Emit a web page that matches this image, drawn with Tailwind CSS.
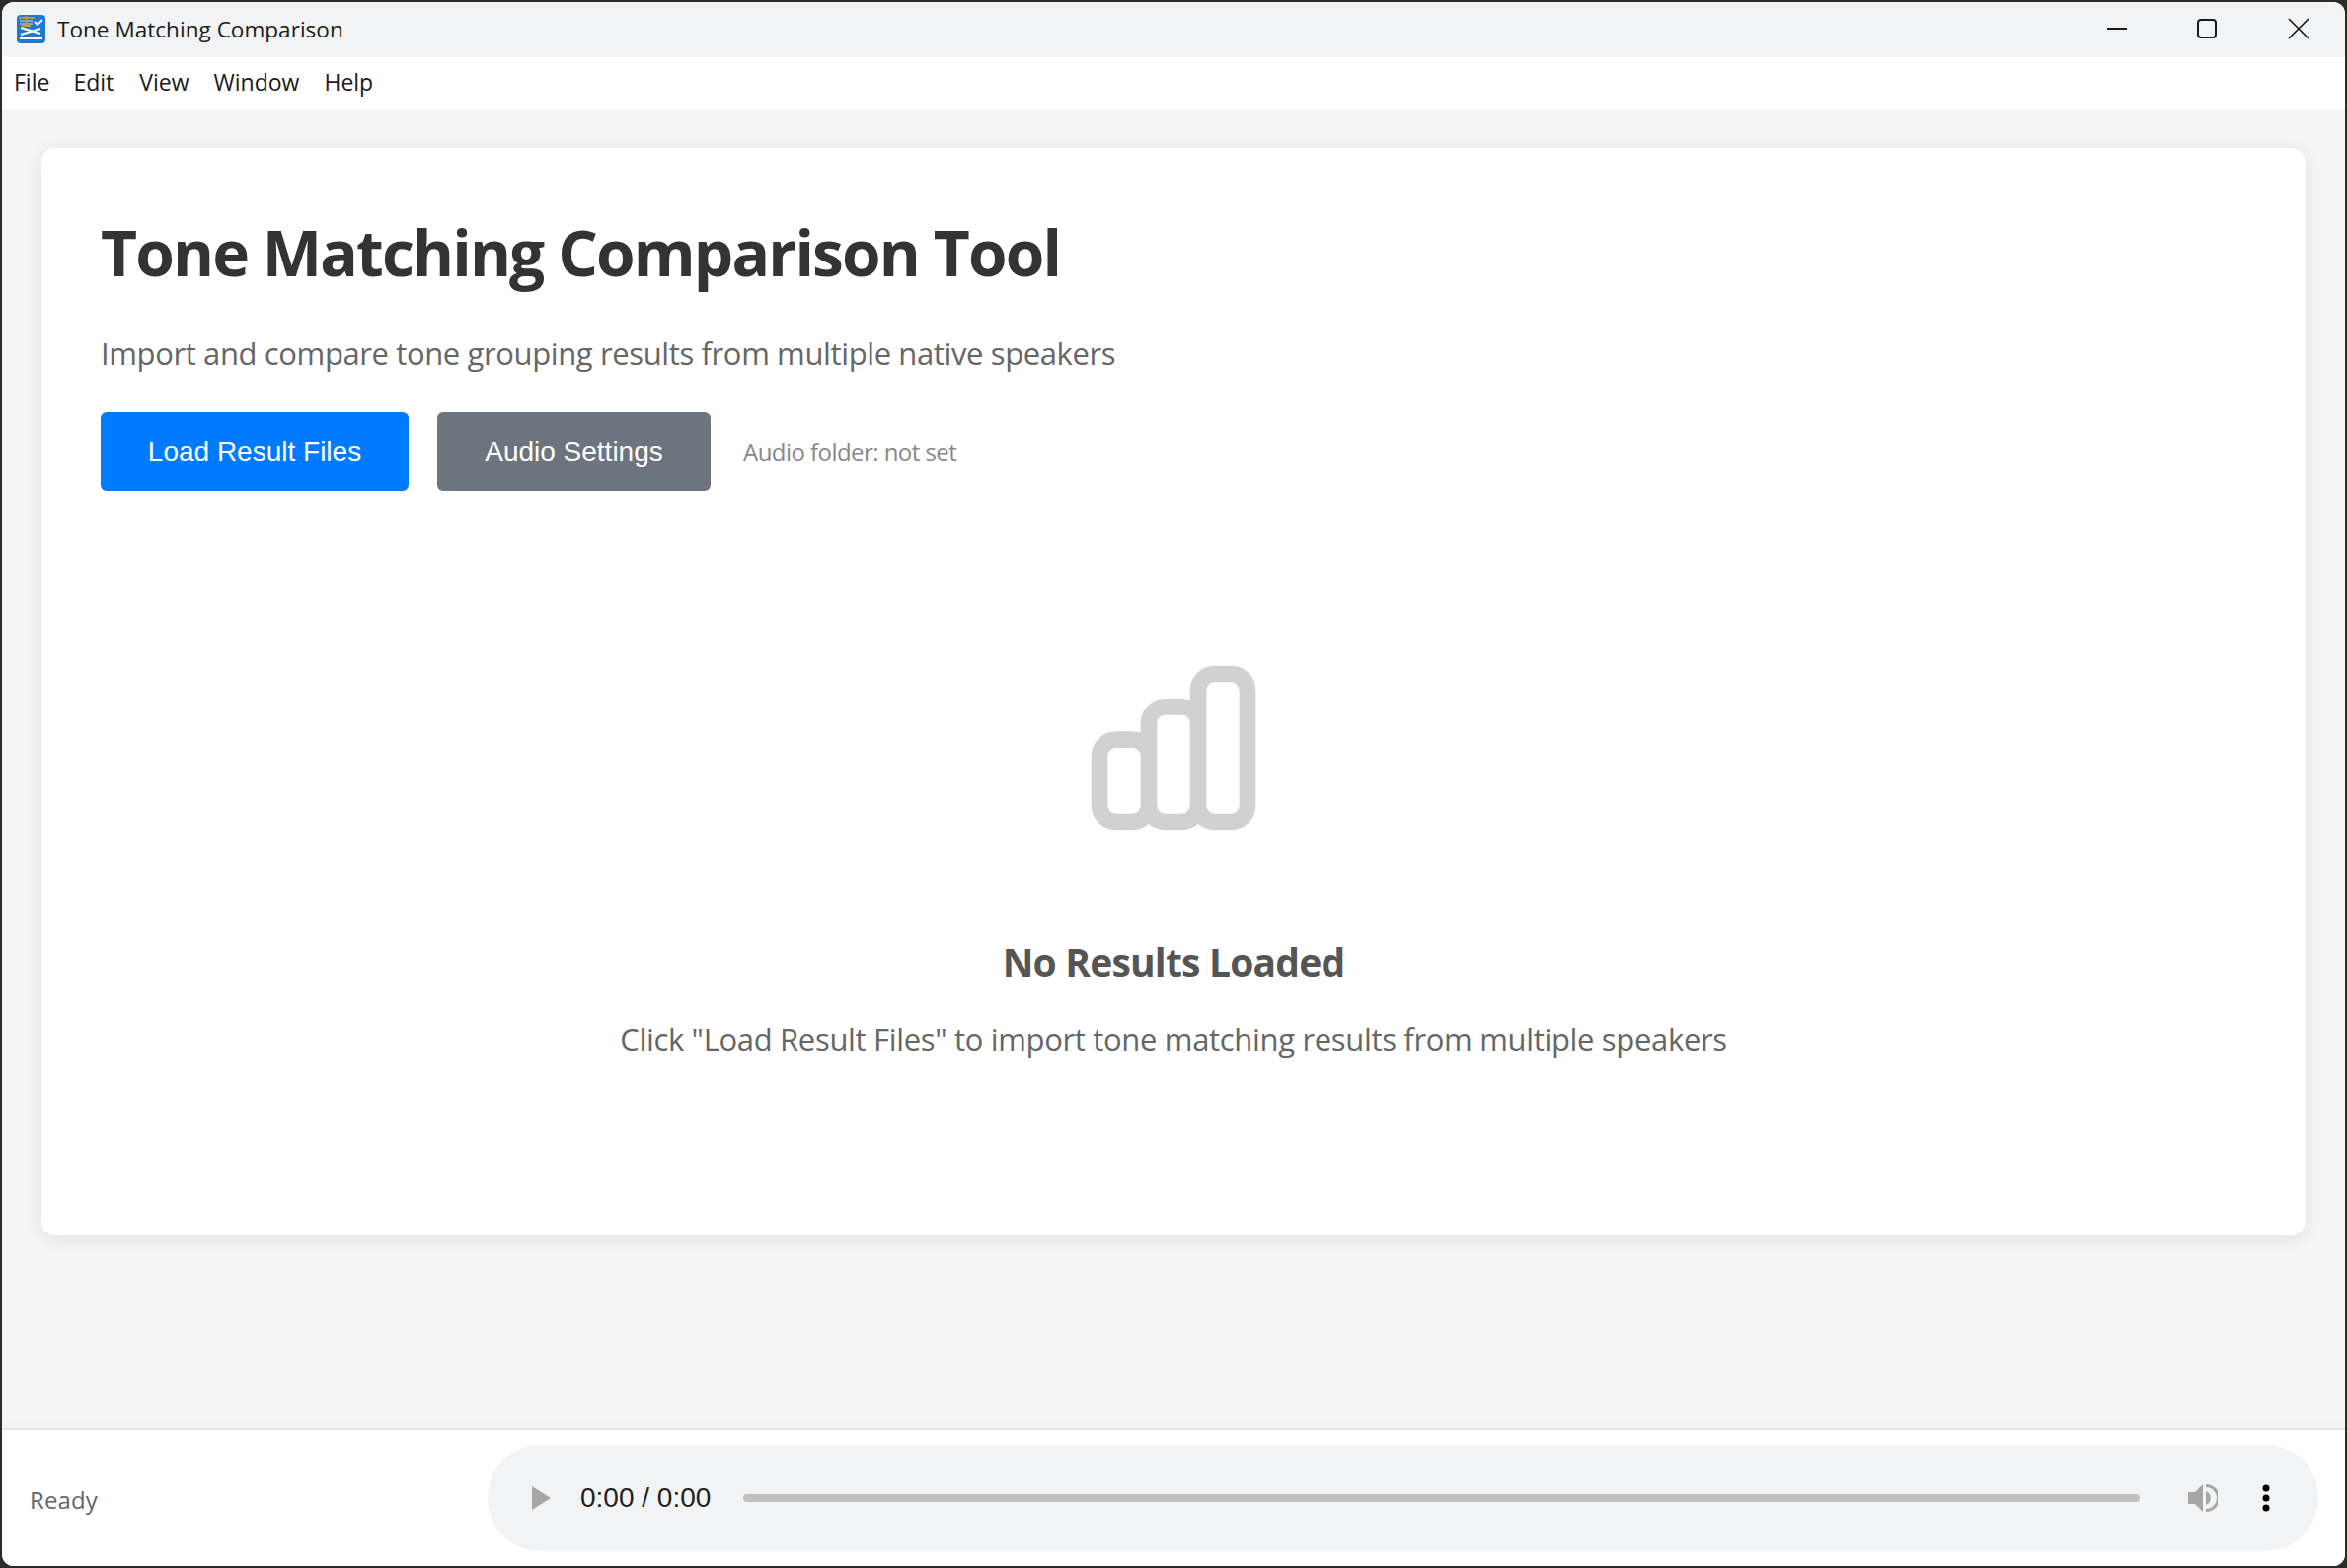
<!DOCTYPE html>
<html lang="en">
<head>
    <meta charset="UTF-8">
    <meta name="viewport" content="width=device-width, initial-scale=1.0">
    <title>Tone Matching Comparison</title>
    <script src="https://cdn.jsdelivr.net/npm/@tailwindcss/browser@4"></script>
</head>
<body class="bg-[#2b2b2b] h-[1589px] w-[2378px] overflow-hidden font-['Open_Sans',sans-serif]">
    <div class="mt-[2px] ml-[2px] w-[2374px] h-[1585px] rounded-[12px] overflow-hidden flex flex-col bg-[#f5f5f5]">
        <!-- title bar -->
        <div class="h-[56px] bg-[#f1f3f5] flex items-center shrink-0">
            <svg class="ml-[15px] w-[29px] h-[30px] -mt-[2px]" viewBox="0 0 29 30">
                <rect width="29" height="29" y="1" rx="4" fill="#1f78d1"/>
                <path d="M3 10h13M3 7h13" stroke="#a9b4bf" stroke-width="1.500" fill="none"/>
                <path d="M2 4h16M9.500 2v10M5 12h9" stroke="#c39a2b" stroke-width="1.800" fill="none"/>
                <path d="M18 8l3 3 5-5" stroke="#fff" stroke-width="1.800" fill="none"/>
                <path d="M4 14l20 6M4 21l20-6M3 25h23" stroke="#fff" stroke-width="2" fill="none"/>
            </svg>
            <span class="ml-[12px] text-[22.5px] text-[#1a1a1a] tracking-[0.04px]">Tone Matching Comparison</span>
            <div class="ml-auto flex items-center text-[#1a1a1a] -mt-[3px]">
                <svg class="w-[22px] h-[22px]" viewBox="0 0 22 22"><path d="M1 11h20" stroke="currentColor" stroke-width="2"/></svg>
                <svg class="ml-[69px] w-[22px] h-[22px]" viewBox="0 0 22 22"><rect x="2" y="2" width="18" height="18" rx="3" fill="none" stroke="currentColor" stroke-width="2"/></svg>
                <svg class="ml-[71px] mr-[36px] w-[22px] h-[22px]" viewBox="0 0 22 22"><path d="M1 1l20 20M21 1L1 21" stroke="currentColor" stroke-width="1.700"/></svg>
            </div>
        </div>
        <!-- menu bar -->
        <div class="h-[52px] bg-white flex items-center shrink-0 text-[23px] text-[#1a1a1a] pb-[2px]">
            <span class="ml-[12px]">File</span>
            <span class="ml-[24px]">Edit</span>
            <span class="ml-[26px]">View</span>
            <span class="ml-[25px]">Window</span>
            <span class="ml-[25px]">Help</span>
        </div>
        <!-- main -->
        <div class="flex-1 pt-[40px] pl-[40px] pr-[40px]">
            <div class="bg-white rounded-[14px] h-[1102px] shadow-[0_3px_20px_rgba(0,0,0,0.09)] pt-[63px] px-[60px]">
                <h1 class="text-[64px] leading-[88px] font-bold text-[#333] tracking-[-1.87px] -mt-[1px]">Tone Matching Comparison Tool</h1>
                <p class="mt-[36px] text-[31px] leading-[44px] text-[#666] tracking-[-0.38px]">Import and compare tone grouping results from multiple native speakers</p>
                <div class="mt-[38px] flex items-center">
                    <button class="w-[312px] h-[80px] rounded-[6px] bg-[#007bff] text-white text-[28px] font-['Liberation_Sans',sans-serif]">Load Result Files</button>
                    <button class="ml-[29px] w-[277px] h-[80px] rounded-[6px] bg-[#6c757d] text-white text-[28px] font-['Liberation_Sans',sans-serif]">Audio Settings</button>
                    <span class="ml-[33px] text-[24px] text-[#888] tracking-[-0.55px]">Audio folder: not set</span>
                </div>
                <div class="mt-[160px] flex flex-col items-center text-center">
                    <svg class="w-[200px] h-[200px] text-[#d1d1d1]" fill="none" stroke="currentColor" viewBox="0 0 24 24">
                        <path stroke-linecap="round" stroke-linejoin="round" stroke-width="2" d="M9 19v-6a2 2 0 00-2-2H5a2 2 0 00-2 2v6a2 2 0 002 2h2a2 2 0 002-2zm0 0V9a2 2 0 012-2h2a2 2 0 012 2v10m-6 0a2 2 0 002 2h2a2 2 0 002-2m0 0V5a2 2 0 012-2h2a2 2 0 012 2v14a2 2 0 01-2 2h-2a2 2 0 01-2-2z"/>
                    </svg>
                    <h3 class="mt-[90px] text-[39px] leading-[54px] font-bold text-[#555] tracking-[-0.8px]">No Results Loaded</h3>
                    <p class="mt-[29px] text-[31px] leading-[44px] text-[#666] tracking-[-0.33px]">Click "Load Result Files" to import tone matching results from multiple speakers</p>
                </div>
            </div>
        </div>
        <!-- status bar -->
        <div class="h-[140px] bg-white border-t-[2px] border-[#e5e5e5] shadow-[0_-3px_10px_rgba(0,0,0,0.03)] flex items-center shrink-0 pl-[28px] pr-[27px]">
            <span class="w-[464px] text-[24px] text-[#666] mt-[4px] tracking-[0.1px]">Ready</span>
            <div class="flex-1 h-[108px] rounded-full bg-[#f1f3f4] flex items-center pl-[45px] font-['Liberation_Sans',sans-serif]">
                <svg class="w-[19px] h-[24px]" viewBox="0 0 19 24"><path d="M0 0l19 12L0 24z" fill="#a6a6a6"/></svg>
                <span class="ml-[30px] text-[28px] text-[#1f1f1f]">0:00 / 0:00</span>
                <div class="ml-[33px] w-[1415px] h-[8px] rounded-full bg-[#c0c0c0]"></div>
                <svg class="ml-[49px] w-[30px] h-[30px]" viewBox="0 0 30 30">
                    <path d="M0 9h7L15 1v28l-8-8H0z" fill="#a6a6a6"/>
                    <path d="M18 8a7.500 7.500 0 010 14z" fill="#a6a6a6"/>
                    <path d="M18 1a14 14 0 010 28v-3a11 11 0 000-22z" fill="#a6a6a6"/>
                </svg>
                <svg class="ml-[45px] w-[8px] h-[28px]" viewBox="0 0 8 28">
                    <circle cx="4" cy="4" r="3.500"/><circle cx="4" cy="14" r="3.500"/><circle cx="4" cy="24" r="3.500"/>
                </svg>
            </div>
        </div>
    </div>
</body>
</html>
